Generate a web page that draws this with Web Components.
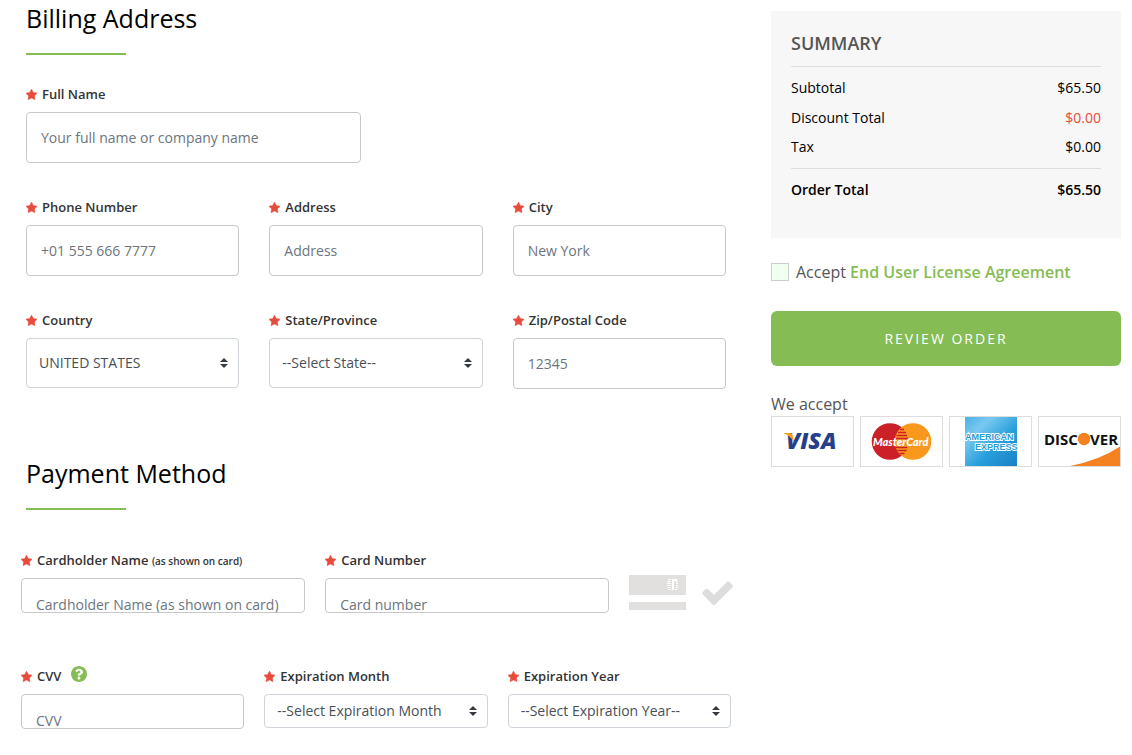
<!DOCTYPE html>
<html lang="en">
<head>
<meta charset="utf-8">
<meta name="viewport" content="width=device-width, initial-scale=1">
<title>Checkout</title>
<style>
  body {
    margin: 0;
    background: #fff;
    color: #000;
    font: 14px/20px "Open Sans", sans-serif;
    --accent: #85bc54;
    --danger: #e74c3c;
  }
</style>
</head>
<body>
<checkout-page></checkout-page>

<template id="checkout-page">
  <style>
    :host { display: block; }
    main {
      display: grid;
      grid-template-columns: minmax(0, 1fr) 350px;
      gap: 45px;
      align-items: start;
      padding: 0 11px 24px 26px;
    }
    .row { display: grid; grid-template-columns: repeat(12, minmax(0, 1fr)); }
    .billing { gap: 34px 30px; margin: 29px 0 66px; }
    .payment { gap: 53px 20px; margin: 40px -5px 0; }
    .third { grid-column: span 4; }
    .half { grid-column: 1 / span 6; }
    .half + .third { grid-column: 1 / span 4; }
    .five { grid-column: span 5; }
    card-preview { grid-column: span 2; }
    aside { padding-top: 11px; }
    @media (max-width: 800px) {
      main { grid-template-columns: minmax(0, 1fr); padding-right: 26px; }
    }
  </style>
  <main>
    <form>
      <section-title>Billing Address</section-title>
      <div class="row billing">
        <text-field class="half" placeholder="Your full name or company name">Full Name</text-field>
        <text-field class="third" placeholder="+01 555 666 7777">Phone Number</text-field>
        <text-field class="third" placeholder="Address">Address</text-field>
        <text-field class="third" placeholder="New York">City</text-field>
        <select-field class="third" value="UNITED STATES">Country</select-field>
        <select-field class="third" value="--Select State--">State/Province</select-field>
        <text-field class="third" placeholder="12345">Zip/Postal Code</text-field>
      </div>
      <section-title>Payment Method</section-title>
      <div class="row payment">
        <text-field compact class="five" placeholder="Cardholder Name (as shown on card)">Cardholder Name <small slot="note">(as shown on card)</small></text-field>
        <text-field compact class="five" placeholder="Card number">Card Number</text-field>
        <card-preview></card-preview>
        <text-field compact class="third" placeholder="CVV">CVV<help-button slot="help"></help-button></text-field>
        <select-field compact class="third" value="--Select Expiration Month">Expiration Month</select-field>
        <select-field compact class="third" value="--Select Expiration Year--">Expiration Year</select-field>
      </div>
    </form>
    <aside>
      <order-summary></order-summary>
      <license-check></license-check>
      <review-button>REVIEW ORDER</review-button>
      <accepted-cards>We accept</accepted-cards>
    </aside>
  </main>
</template>

<template id="section-title">
  <style>
    :host { display: block; }
    h2 { margin: 0; font-size: 25px; line-height: 37px; font-weight: 400; }
    h2::after {
      content: "";
      display: block;
      width: 100px;
      height: 2px;
      margin-top: 16px;
      background: var(--accent);
    }
  </style>
  <h2><slot></slot></h2>
</template>

<template id="field">
  <style>
    :host { display: block; }
    .head { display: flex; align-items: center; height: 20px; margin-bottom: 8px; }
    .head svg { flex: none; width: 11px; height: 11px; margin-right: 5px; fill: var(--danger); stroke: var(--danger); stroke-width: 60; }
    label { font-size: 13px; font-weight: 600; color: #333; white-space: nowrap; }
    ::slotted(small) { font-size: 10px; }
    ::slotted(help-button) { align-self: flex-start; margin-left: 10px; }
    input, select {
      display: block;
      box-sizing: border-box;
      width: 100%;
      margin: 0;
      border-radius: 4px;
      background: #fff;
      font: inherit;
      color: #495057;
    }
    input { height: 51px; padding: 0 14px; border: 1px solid #c8c8c8; }
    input::placeholder { color: #6c757d; opacity: 1; }
    select {
      height: 50px;
      padding: 0 26px 0 12px;
      border: 1px solid #ced4da;
      appearance: none;
      background: #fff url("data:image/svg+xml,%3Csvg xmlns='http://www.w3.org/2000/svg' viewBox='0 0 4 5'%3E%3Cpath fill='%23343a40' d='M2 0L0 2h4zm0 5L0 3h4z'/%3E%3C/svg%3E") no-repeat right 10px center / 8px 10px;
    }
    :host([compact]) input { height: 35px; padding-top: 17px; }
    :host([compact]) select { height: 34px; }
  </style>
  <div class="head">
    <svg viewBox="0 0 1664 1664" aria-hidden="true"><path d="M1664 647q0 22-26 48l-363 354 86 500q1 7 1 20 0 21-10.500 35.500t-30.500 14.500q-19 0-40-12l-449-236-449 236q-22 12-40 12-21 0-31.500-14.500t-10.500-35.500q0-6 2-20l86-500-364-354q-25-27-25-48 0-37 56-46l502-73 225-455q19-41 49-41t49 41l225 455 502 73q56 9 56 46z"/></svg>
    <label for="control"><slot></slot><slot name="note"></slot></label>
    <slot name="help"></slot>
  </div>
</template>

<template id="help-button">
  <style>
    :host { display: block; }
    button { display: block; width: 16px; height: 16px; padding: 0; border: 0; background: none; cursor: pointer; }
    svg { display: block; width: 16px; height: 16px; fill: var(--accent); }
  </style>
  <button type="button" aria-label="What is CVV?"><svg viewBox="8 8 496 496"><path d="M504 256c0 136.997-111.043 248-248 248S8 392.997 8 256C8 119.083 119.043 8 256 8s248 111.083 248 248zM262.655 90c-54.497 0-89.255 22.957-116.549 63.758-3.536 5.286-2.353 12.415 2.715 16.258l34.699 26.310c5.205 3.947 12.621 3.008 16.665-2.122 17.864-22.658 30.113-35.797 57.303-35.797 20.429 0 45.698 13.148 45.698 32.958 0 14.976-12.363 22.667-32.534 33.976C247.128 238.528 216 254.941 216 296v4c0 6.627 5.373 12 12 12h56c6.627 0 12-5.373 12-12v-1.333c0-28.462 83.186-29.647 83.186-106.667 0-58.002-60.165-102-116.531-102zM256 338c-25.365 0-46 20.635-46 46 0 25.364 20.635 46 46 46s46-20.636 46-46c0-25.364-20.635-46-46-46z"/></svg></button>
</template>

<template id="card-preview">
  <style>
    :host { display: flex; align-items: center; align-self: start; gap: 16px; padding-top: 25px; }
    svg { display: block; flex: none; }
  </style>
  <svg width="57" height="35" viewBox="0 0 57 35" aria-hidden="true">
    <path fill="#e1e0de" d="M0 0h57v20H0zM0 27h57v8H0z"/>
    <path fill="none" stroke="#fff" d="M39 4.500h3M38 6.500h4M38 8.500h4M38 10.500h4M38 12.500h4M39 14.500h3M47 6.500h2M47 8.500h2M47 10.500h2M47 12.500h2M46 14.500h2"/>
    <path fill="none" stroke="#fff" stroke-width="2" d="M43 5h5M44 5v10"/>
  </svg>
  <svg width="31" height="24" viewBox="121 306 1550 1216" fill="#ddd" aria-hidden="true"><path d="M1671 566q0 40-28 68l-724 724-136 136q-28 28-68 28t-68-28l-136-136-362-362q-28-28-28-68t28-68l136-136q28-28 68-28t68 28l294 295 656-657q28-28 68-28t68 28l136 136q28 28 28 68z"/></svg>
</template>

<template id="order-summary">
  <style>
    :host { display: block; padding: 20px 20px 33px; background: #f7f7f7; }
    h3 { margin: 0; padding-bottom: 10px; border-bottom: 1px solid #ddd; font-size: 18px; line-height: 25px; font-weight: 600; color: #555; }
    table { width: 100%; border-collapse: separate; border-spacing: 0; }
    th, td { padding: 0; height: 30px; font-weight: 400; text-align: left; }
    td { text-align: right; }
    tbody:first-of-type::before { content: ""; display: table-row; height: 6px; }
    .discount { color: var(--danger); }
    .last > * { padding-bottom: 7px; border-bottom: 1px solid #ddd; height: 28px; }
    .total > * { padding-top: 6px; font-weight: 600; }
  </style>
  <h3>SUMMARY</h3>
  <table>
    <tbody>
      <tr><th scope="row">Subtotal</th><td>$65.50</td></tr>
      <tr><th scope="row">Discount Total</th><td class="discount">$0.00</td></tr>
      <tr class="last"><th scope="row">Tax</th><td>$0.00</td></tr>
      <tr class="total"><th scope="row">Order Total</th><td>$65.50</td></tr>
    </tbody>
  </table>
</template>

<template id="license-check">
  <style>
    :host { display: flex; align-items: center; gap: 7px; margin-top: 22px; font-size: 16px; line-height: 24px; color: #555; }
    input { appearance: none; flex: none; box-sizing: border-box; width: 18px; height: 18px; margin: 0; border: 1px solid #c8cec8; background: #f0fff0; }
    input:checked { background: var(--accent); }
    a { color: var(--accent); font-weight: 600; text-decoration: none; }
  </style>
  <input type="checkbox" id="accept">
  <label for="accept">Accept <a href="#license">End User License Agreement</a></label>
</template>

<template id="review-button">
  <style>
    :host { display: block; margin-top: 27px; }
    button { display: block; width: 100%; height: 55px; padding: 0; border: 0; border-radius: 6px; background: var(--accent); color: #fff; font: inherit; font-size: 14px; letter-spacing: 2px; cursor: pointer; }
  </style>
  <button type="button"><slot></slot></button>
</template>

<template id="accepted-cards">
  <style>
    :host { display: block; margin-top: 26px; font-size: 16px; line-height: 24px; color: #555; }
    .cards { display: grid; grid-template-columns: repeat(4, 1fr); gap: 6px; }
    svg { display: block; box-sizing: border-box; width: 100%; height: 51px; border: 1px solid #ddd; }
  </style>
  <slot></slot>
  <div class="cards">
    <svg viewBox="1 1 81 49" role="img" aria-label="Visa">
      <text x="15" y="33" font-family="Open Sans" font-weight="800" font-style="italic" font-size="23" fill="#263f8d">VISA</text>
      <path fill="#f7a21b" d="M13 17h6q2 0 2.500 2l2 8Q20 20 13 17.500z"/>
    </svg>
    <svg viewBox="1 1 81 49" role="img" aria-label="MasterCard">
      <circle cx="30" cy="25.500" r="18.300" fill="#cc2029"/>
      <circle cx="53" cy="25.500" r="18.300" fill="#f8981d"/>
      <path stroke="#cc2029" stroke-width="1.300" d="M40 13.500h4M38 16.500h8M36.500 19.500h10.500M36 22.500h12M36 31.500h11M37.500 34.500h9M39.500 37.500h5"/>
      <text x="13" y="30" font-family="Lato" font-weight="900" font-style="italic" font-size="11" fill="#fff">MasterCard</text>
    </svg>
    <svg viewBox="1 1 81 49" role="img" aria-label="American Express">
      <defs>
        <linearGradient id="sky" x2="1" y2="1">
          <stop offset="0" stop-color="#4bb1e6"/><stop offset=".25" stop-color="#7ac8f1"/><stop offset=".6" stop-color="#279fdb"/><stop offset="1" stop-color="#1c7fc4"/>
        </linearGradient>
      </defs>
      <path fill="url(#sky)" d="M16 1h52v49H16z"/>
      <g font-family="Liberation Sans" font-weight="700" font-size="9" fill="#2b9bd8" stroke="#fff" stroke-width="1.800" paint-order="stroke">
        <text x="16" y="24">AMERICAN</text>
        <text x="26" y="34">EXPRESS</text>
      </g>
    </svg>
    <svg viewBox="1 1 81 49" role="img" aria-label="Discover">
      <path fill="#f58220" d="M32 50Q62 44 82 30.500V50z"/>
      <g font-family="Open Sans" font-weight="700" font-size="15" fill="#111">
        <text x="6" y="29">DISC</text>
        <text x="52" y="29">VER</text>
      </g>
      <circle cx="46" cy="23" r="6.200" fill="#f58220"/>
    </svg>
  </div>
</template>

<script>
  class TemplateElement extends HTMLElement {
    static template = "";
    constructor() {
      super();
      this.attachShadow({ mode: "open" });
      const id = this.constructor.template || this.localName;
      this.shadowRoot.append(document.getElementById(id).content.cloneNode(true));
    }
  }

  class TextField extends TemplateElement {
    static template = "field";
    connectedCallback() {
      if (this.shadowRoot.getElementById("control")) return;
      const input = document.createElement("input");
      input.id = "control";
      input.type = "text";
      input.placeholder = this.getAttribute("placeholder") || "";
      this.shadowRoot.append(input);
    }
  }

  class SelectField extends TemplateElement {
    static template = "field";
    connectedCallback() {
      if (this.shadowRoot.getElementById("control")) return;
      const select = document.createElement("select");
      select.id = "control";
      select.add(new Option(this.getAttribute("value")));
      this.shadowRoot.append(select);
    }
  }

  customElements.define("section-title", class extends TemplateElement { static template = "section-title"; });
  customElements.define("help-button", class extends TemplateElement { static template = "help-button"; });
  customElements.define("card-preview", class extends TemplateElement { static template = "card-preview"; });
  customElements.define("order-summary", class extends TemplateElement { static template = "order-summary"; });
  customElements.define("license-check", class extends TemplateElement { static template = "license-check"; });
  customElements.define("review-button", class extends TemplateElement { static template = "review-button"; });
  customElements.define("accepted-cards", class extends TemplateElement { static template = "accepted-cards"; });
  customElements.define("text-field", TextField);
  customElements.define("select-field", SelectField);
  customElements.define("checkout-page", class extends TemplateElement { static template = "checkout-page"; });
</script>
</body>
</html>
